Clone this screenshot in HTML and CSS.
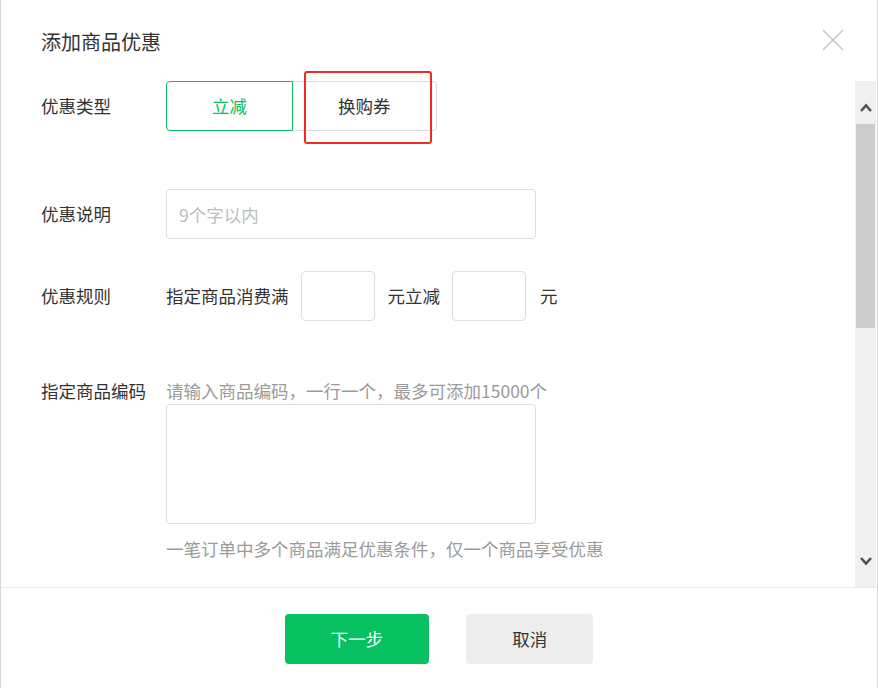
FILE: index.html
```html
<!DOCTYPE html>
<html lang="zh-CN">
<head>
<meta charset="utf-8">
<title>添加商品优惠</title>
<link rel="stylesheet" href="styles.css">
</head>
<body>
<div class="dialog">
  <div class="header">
    <div class="title">添加商品优惠</div>
    <button class="close" aria-label="关闭">
      <svg width="22" height="22" viewBox="0 0 22 22"><path d="M1 1 L21 21 M21 1 L1 21" stroke="#c8c8c8" stroke-width="1.7" fill="none"/></svg>
    </button>
  </div>
  <div class="body">
    <div class="content">
      <div class="row row-type">
        <div class="label">优惠类型</div>
        <div class="seg">
          <button class="seg-btn active">立减</button>
          <button class="seg-btn">换购券</button>
        </div>
      </div>
      <div class="row row-desc">
        <div class="label">优惠说明</div>
        <input class="text-input wide" type="text" placeholder="9个字以内">
      </div>
      <div class="row row-rule">
        <div class="label">优惠规则</div>
        <span class="txt">指定商品消费满</span>
        <input class="text-input small" type="text">
        <span class="txt">元立减</span>
        <input class="text-input small" type="text">
        <span class="txt">元</span>
      </div>
      <div class="row row-code">
        <div class="label">指定商品编码</div>
        <div class="code-col">
          <div class="hint">请输入商品编码，一行一个，最多可添加15000个</div>
          <textarea class="code-area"></textarea>
          <div class="hint note">一笔订单中多个商品满足优惠条件，仅一个商品享受优惠</div>
        </div>
      </div>
    </div>
    <div class="scrollbar">
      <div class="sb-btn sb-up">
        <svg width="14" height="11" viewBox="0 0 14 11"><polyline points="2,9 7,3.5 12,9" fill="none" stroke="#505050" stroke-width="2.6"/></svg>
      </div>
      <div class="sb-thumb"></div>
      <div class="sb-track"></div>
      <div class="sb-btn sb-down">
        <svg width="14" height="11" viewBox="0 0 14 11"><polyline points="2,2 7,7.5 12,2" fill="none" stroke="#505050" stroke-width="2.6"/></svg>
      </div>
    </div>
  </div>
  <div class="footer">
    <button class="btn btn-primary">下一步</button>
    <button class="btn btn-default">取消</button>
  </div>
  <div class="annot"></div>
</div>
</body>
</html>
```

FILE: styles.css
```css
* { box-sizing: border-box; }
html, body { margin: 0; padding: 0; background: #fff; }
body {
  font-family: "Noto Sans CJK SC", "Microsoft YaHei", sans-serif;
  font-size: 17.5px;
  color: #353535;
}
button, input, textarea { font-family: inherit; font-size: inherit; }

.dialog {
  position: relative;
  width: 878px;
  height: 688px;
  border-left: 1px solid #d6d6d6;
  border-right: 1px solid #d6d6d6;
  background: #fff;
  display: flex;
  flex-direction: column;
}

.header {
  height: 81px;
  flex: none;
  display: flex;
  justify-content: space-between;
  align-items: flex-start;
  padding: 28px 33px 0 40px;
}
.title {
  font-size: 20px;
  line-height: 28px;
  color: #333;
}
.close {
  border: 0;
  background: none;
  padding: 0;
  margin-top: 1px;
  width: 22px;
  height: 22px;
  display: block;
}
.close svg { display: block; }

.body {
  height: 506px;
  flex: none;
  display: flex;
}
.content {
  flex: 1;
  overflow: hidden;
  padding-left: 40px;
}

.row { display: flex; align-items: center; }
.label {
  width: 125px;
  flex: none;
  line-height: 24px;
  color: #333;
}

.row-type { height: 50px; }
.seg { display: flex; }
.seg-btn {
  height: 50px;
  padding: 0 45px;
  background: #fff;
  border: 1px solid #dcdcdc;
  color: #333;
  line-height: 24px;
}
.seg-btn:first-child { border-radius: 4px 0 0 4px; }
.seg-btn:last-child { border-radius: 0 4px 4px 0; margin-left: -1px; }
.seg-btn.active {
  border-color: #07c160;
  color: #07c160;
  position: relative;
  z-index: 1;
}

.row-desc { margin-top: 58px; }
.text-input {
  height: 50px;
  border: 1px solid #dedede;
  border-radius: 4px;
  padding: 0 12px;
  color: #333;
  outline: none;
  background: #fff;
}
.text-input::placeholder { color: #bdbdbd; }
.wide { width: 370px; }

.row-rule { margin-top: 32px; }
.txt { line-height: 24px; color: #333; }
.small { width: 74px; margin: 0 13px 0 12px; }
.small + .txt + .small { margin-left: 12px; margin-right: 14px; }

.row-code { margin-top: 58px; align-items: flex-start; }
.code-col { display: flex; flex-direction: column; }
.hint { line-height: 24px; color: #9b9b9b; white-space: nowrap; }
.code-area {
  width: 370px;
  height: 120px;
  margin-top: 1px;
  border: 1px solid #dedede;
  border-radius: 4px;
  resize: none;
  outline: none;
  padding: 8px 12px;
}
.note { margin-top: 13px; }

.scrollbar {
  width: 21px;
  flex: none;
  margin-right: 1px;
  background: #f0f0f0;
  display: flex;
  flex-direction: column;
}
.sb-btn {
  height: 43px;
  flex: none;
  display: flex;
  justify-content: center;
}
.sb-up { align-items: flex-start; padding-top: 21px; }
.sb-down { align-items: flex-end; padding-bottom: 20px; }
.sb-btn svg { display: block; }
.sb-thumb {
  height: 204px;
  margin: 0 1px;
  background: #cdcdcd;
  flex: none;
}
.sb-track { flex: 1; }

.footer {
  flex: 1;
  border-top: 1px solid #e9e9e9;
  display: flex;
  justify-content: center;
  align-items: flex-start;
  gap: 37px;
  padding-top: 26px;
}
.btn {
  height: 50px;
  padding: 0 46px;
  border: 0;
  border-radius: 4px;
  line-height: 24px;
}
.btn-primary { background: #07c160; color: #fff; }
.btn-default { background: #ededed; color: #333; }

.annot {
  position: absolute;
  left: 303px;
  top: 71px;
  width: 128px;
  height: 73px;
  border: 2px solid #f42a22;
  border-radius: 3px;
  pointer-events: none;
}
```
